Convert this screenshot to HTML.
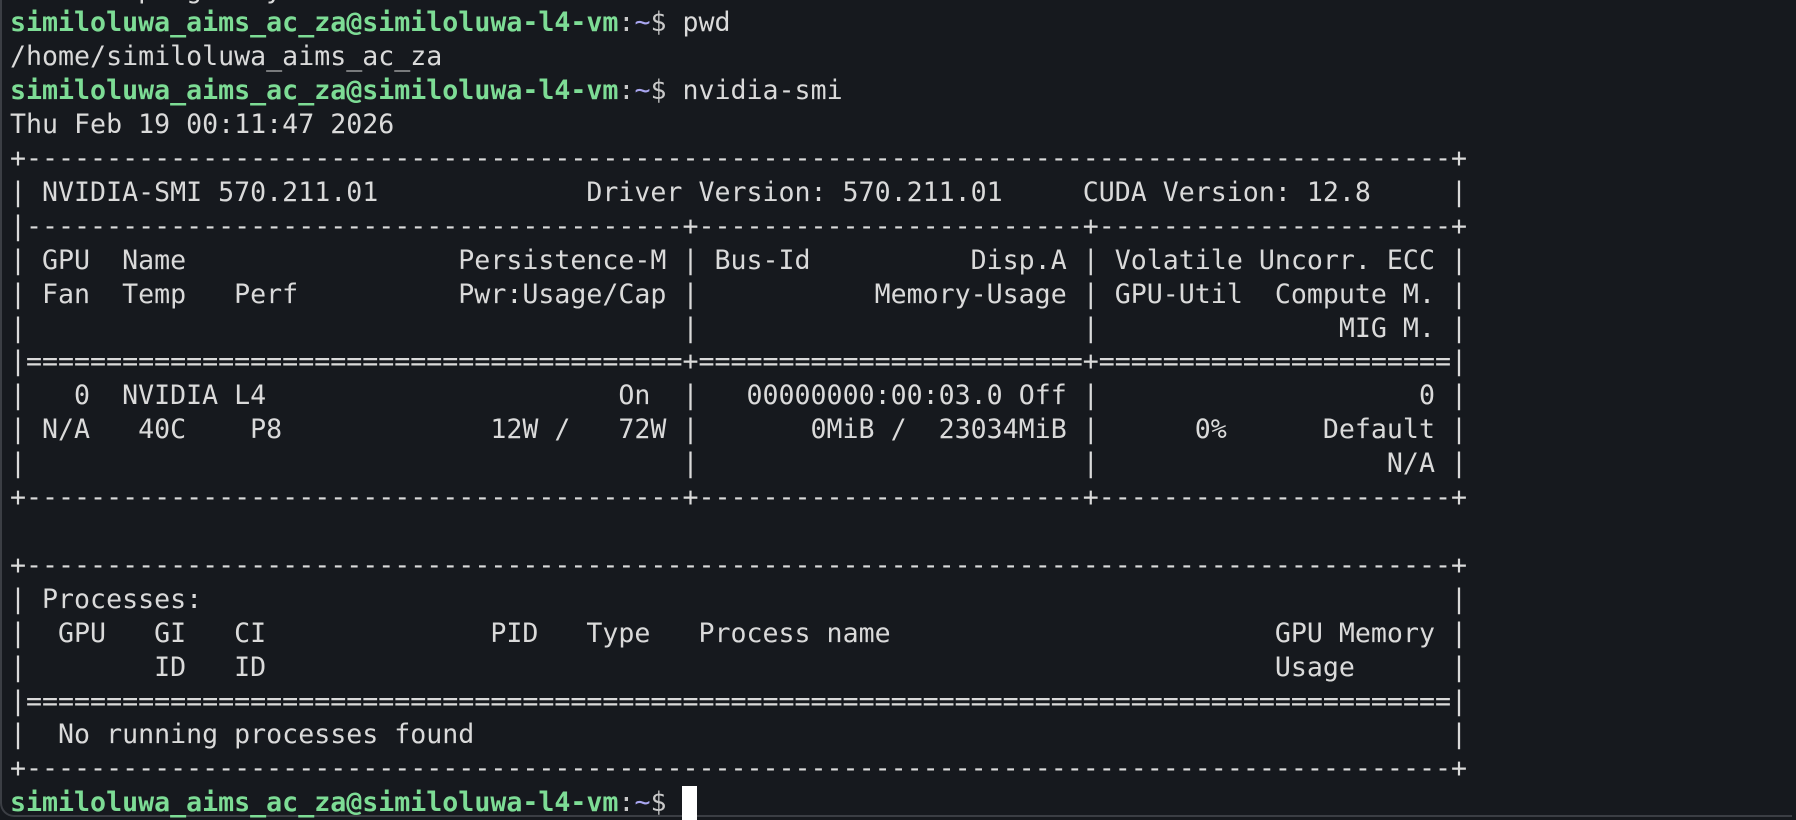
<!DOCTYPE html>
<html><head><meta charset="utf-8"><style>
html,body{margin:0;padding:0;background:#16191e;width:1796px;height:820px;overflow:hidden}
#w{position:absolute;left:0;top:-40px;width:1790px;height:855px;border-left:2px solid #3b3e44;border-bottom:2px solid #3b3e44;border-bottom-left-radius:14px;}
pre{position:absolute;left:10px;top:-27.5px;margin:0;font-family:"DejaVu Sans Mono","Liberation Mono",monospace;font-size:26.6px;line-height:33.9px;color:#dadada;white-space:pre}
.g{color:#7ddc95;font-weight:bold}
.c{color:#c8c8c8}
.t{color:#a9a6f0}
b{display:inline-block;font-weight:normal}
.cur{display:inline-block;width:15px;height:34px;background:#fff;vertical-align:top;margin-top:0px}
</style></head><body><div id="w"></div><pre>  sudo apt-get -y install ...
<span class="g">similoluwa_aims_ac_za@similoluwa-l4-vm</span><span class="c">:</span><span class="t">~</span><span class="c">$</span> pwd
/home/similoluwa_aims_ac_za
<span class="g">similoluwa_aims_ac_za@similoluwa-l4-vm</span><span class="c">:</span><span class="t">~</span><span class="c">$</span> nvidia-smi
Thu Feb 19 00:11:47 2026
+-----------------------------------------------------------------------------------------+
| NVIDIA-SMI 570.211.01<b style="width:13ch"></b>Driver Version: 570.211.01<b style="width:5ch"></b>CUDA Version: 12.8<b style="width:5ch"></b>|
|-----------------------------------------+------------------------+----------------------+
| GPU  Name<b style="width:17ch"></b>Persistence-M | Bus-Id<b style="width:10ch"></b>Disp.A | Volatile Uncorr. ECC |
| Fan  Temp   Perf<b style="width:10ch"></b>Pwr:Usage/Cap |<b style="width:11ch"></b>Memory-Usage | GPU-Util  Compute M. |
|<b style="width:41ch"></b>|<b style="width:24ch"></b>|<b style="width:15ch"></b>MIG M. |
|=========================================+========================+======================|
|   0  NVIDIA L4<b style="width:22ch"></b>On  |   00000000:00:03.0 Off |<b style="width:20ch"></b>0 |
| N/A   40C    P8<b style="width:13ch"></b>12W /   72W |       0MiB /  23034MiB |      0%      Default |
|<b style="width:41ch"></b>|<b style="width:24ch"></b>|<b style="width:18ch"></b>N/A |
+-----------------------------------------+------------------------+----------------------+

+-----------------------------------------------------------------------------------------+
| Processes:<b style="width:78ch"></b>|
|  GPU   GI   CI<b style="width:14ch"></b>PID   Type   Process name<b style="width:24ch"></b>GPU Memory |
|        ID   ID<b style="width:63ch"></b>Usage<b style="width:6ch"></b>|
|=========================================================================================|
|  No running processes found<b style="width:61ch"></b>|
+-----------------------------------------------------------------------------------------+
<span class="g">similoluwa_aims_ac_za@similoluwa-l4-vm</span><span class="c">:</span><span class="t">~</span><span class="c">$</span> <span class="cur"></span></pre></body></html>
